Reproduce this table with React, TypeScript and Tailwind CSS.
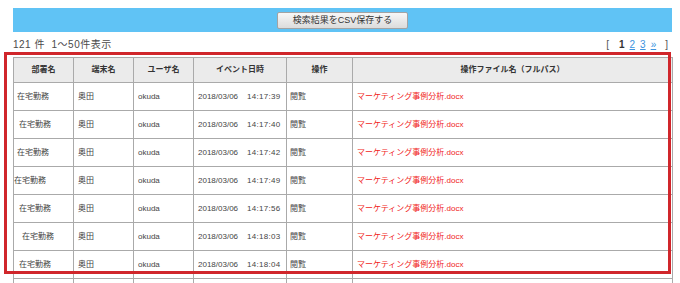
import React from 'react';

interface LogRow {
    dept: string;
    pad: string;
    terminal: string;
    user: string;
    date: string;
    time: string;
    action: string;
    file: string;
}

const rows: LogRow[] = [
    { dept: '在宅勤務', pad: 'pl-[3px]', terminal: '奥田', user: 'okuda', date: '2018/03/06', time: '14:17:39', action: '閲覧', file: 'マーケティング事例分析.docx' },
    { dept: '在宅勤務', pad: 'pl-[5px]', terminal: '奥田', user: 'okuda', date: '2018/03/06', time: '14:17:40', action: '閲覧', file: 'マーケティング事例分析.docx' },
    { dept: '在宅勤務', pad: 'pl-[3px]', terminal: '奥田', user: 'okuda', date: '2018/03/06', time: '14:17:42', action: '閲覧', file: 'マーケティング事例分析.docx' },
    { dept: '在宅勤務', pad: 'pl-[0px]', terminal: '奥田', user: 'okuda', date: '2018/03/06', time: '14:17:49', action: '閲覧', file: 'マーケティング事例分析.docx' },
    { dept: '在宅勤務', pad: 'pl-[5px]', terminal: '奥田', user: 'okuda', date: '2018/03/06', time: '14:17:56', action: '閲覧', file: 'マーケティング事例分析.docx' },
    { dept: '在宅勤務', pad: 'pl-[8px]', terminal: '奥田', user: 'okuda', date: '2018/03/06', time: '14:18:03', action: '閲覧', file: 'マーケティング事例分析.docx' },
    { dept: '在宅勤務', pad: 'pl-[5px]', terminal: '奥田', user: 'okuda', date: '2018/03/06', time: '14:18:04', action: '閲覧', file: 'マーケティング事例分析.docx' },
];

const headers = ['部署名', '端末名', 'ユーザ名', 'イベント日時', '操作', '操作ファイル名（フルパス）'];

const cell = 'border border-[#aaaaaa] p-0';

const App: React.FC = () => {
    return (
        <div className="relative w-[680px] h-[283px] overflow-hidden bg-white pt-[8px] pl-[13px] font-['Liberation_Sans','Noto_Sans_CJK_JP',sans-serif] text-[#444]">
            {/* toolbar */}
            <div className="w-[659px] h-[24px] bg-[#60c3f5] flex items-center justify-center">
                <button className="w-[131px] h-[17px] border border-[#a3a3a3] rounded-[2px] bg-gradient-to-b from-[#f7f7f7] to-[#dcdcdc] text-[9px] text-[#333] leading-none">
                    検索結果をCSV保存する
                </button>
            </div>

            {/* count + pager */}
            <div className="w-[659px] h-[25px] flex items-center justify-between">
                <span className="text-[10px] tracking-[0.5px] text-[#4a4a4a] whitespace-pre">121 件  1〜50件表示</span>
                <div className="flex items-center text-[10px] mr-[4px]">
                    <span className="text-[#555] mr-[10px]">[</span>
                    <span className="font-bold text-[#333] mr-[5px]">1</span>
                    <span className="text-[#3d93de] underline mr-[5px]">2</span>
                    <span className="text-[#3d93de] underline mr-[5px]">3</span>
                    <span className="text-[#3d93de] underline mr-[9px]">»</span>
                    <span className="text-[#555]">]</span>
                </div>
            </div>

            {/* result table */}
            <table className="table-fixed border-collapse w-[659px] text-[8px]">
                <colgroup>
                    <col className="w-[60px]" />
                    <col className="w-[60px]" />
                    <col className="w-[60px]" />
                    <col className="w-[93px]" />
                    <col className="w-[66px]" />
                    <col className="w-[320px]" />
                </colgroup>
                <thead>
                    <tr className="h-[25px] bg-[#ebebeb]">
                        {headers.map((h) => (
                            <th key={h} className={`${cell} font-bold text-[#333] text-center`}>
                                {h}
                            </th>
                        ))}
                    </tr>
                </thead>
                <tbody>
                    {rows.map((r, i) => (
                        <tr key={i} className="h-[28px]">
                            <td className={`${cell} ${r.pad}`}>{r.dept}</td>
                            <td className={`${cell} pl-[4px]`}>{r.terminal}</td>
                            <td className={`${cell} pl-[4px]`}>{r.user}</td>
                            <td className={`${cell} pl-[4px] whitespace-nowrap`}>
                                {r.date}
                                <span className="ml-[9px] tracking-[0.3px]">{r.time}</span>
                            </td>
                            <td className={`${cell} pl-[3px]`}>{r.action}</td>
                            <td className={`${cell} pl-[4px] text-[#f01c22]`}>{r.file}</td>
                        </tr>
                    ))}
                    {/* next row, scrolled below the fold */}
                    <tr className="h-[28px]">
                        <td className={cell} />
                        <td className={cell} />
                        <td className={cell} />
                        <td className={cell} />
                        <td className={cell} />
                        <td className={cell} />
                    </tr>
                </tbody>
            </table>

            {/* highlight frame */}
            <div className="absolute left-[4px] top-[52px] w-[667px] h-[222px] border-[3px] border-[#d0262b] pointer-events-none" />
        </div>
    );
};

export default App;
